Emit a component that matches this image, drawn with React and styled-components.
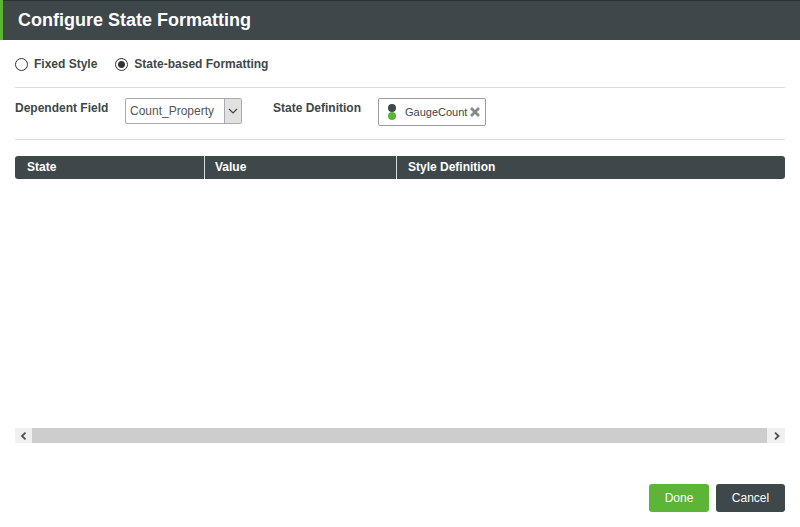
import React, { useState } from 'react';
import styled, { createGlobalStyle } from 'styled-components';

const GlobalStyle = createGlobalStyle`
  * {
    box-sizing: border-box;
  }

  body {
    margin: 0;
    background: #fff;
    color: #3e4749;
    font-family: "Liberation Sans", Arial, sans-serif;
    font-size: 12px;
    line-height: 16px;
  }

  button, select, input {
    font: inherit;
    margin: 0;
  }
`;

const Dialog = styled.main`
  display: flex;
  flex-direction: column;
  min-height: 100vh;
`;

const Header = styled.header`
  display: flex;
  align-items: center;
  height: 40px;
  padding-left: 15px;
  background: #3e4749;
  border-left: 3px solid #5cb536;
  box-shadow: inset 0 1px 0 #2b3235;
`;

const Title = styled.h1`
  margin: 0;
  color: #fff;
  font-size: 18px;
  line-height: 24px;
`;

const Content = styled.div`
  display: flex;
  flex: 1;
  flex-direction: column;
  padding: 0 15px;
`;

const ModeRow = styled.div`
  display: flex;
  gap: 18px;
  padding: 16px 0 15px;
  border-bottom: 1px solid #d8dbde;
`;

const RadioLabel = styled.label`
  display: flex;
  align-items: center;
  gap: 6px;
  font-weight: bold;
`;

const Radio = styled.input`
  appearance: none;
  width: 13px;
  height: 13px;
  border: 1px solid #333;
  border-radius: 50%;
  background: #fff;

  &:checked {
    background: radial-gradient(circle, #333 3px, #fff 4px);
  }
`;

const FieldRow = styled.div`
  display: flex;
  align-items: flex-start;
  height: 52px;
  padding-top: 10px;
  border-bottom: 1px solid #d8dbde;
`;

const FieldLabel = styled.label`
  width: ${props => props.$width};
  padding-top: 2px;
  font-weight: bold;
`;

const SelectBox = styled.div`
  display: grid;
  grid-template-columns: 1fr 17px;
  width: 117px;
  height: 26px;
  margin-right: 31px;
  border: 1px solid #a8abad;
  border-radius: 2px;
`;

const Select = styled.select`
  grid-area: 1 / 1 / 2 / 3;
  appearance: none;
  width: 100%;
  padding: 0 20px 0 4px;
  border: 0;
  background: transparent;
  color: #555;
`;

const SelectArrow = styled.span`
  grid-area: 1 / 2;
  display: flex;
  align-items: center;
  justify-content: center;
  border-left: 1px solid #a8abad;
  background: #e1e1e1;
  pointer-events: none;
`;

const Chip = styled.div`
  display: flex;
  align-items: center;
  height: 28px;
  padding: 0 5px 0 9px;
  border: 1px solid #999c9e;
  border-radius: 2px;
  font-size: 11px;
`;

const ChipName = styled.output`
  margin: 0 3px 0 9px;
`;

const IconButton = styled.button`
  display: flex;
  padding: 0;
  border: 0;
  background: none;
`;

const TablePane = styled.div`
  flex: 1;
  padding-top: 16px;
`;

const Table = styled.table`
  width: 100%;
  table-layout: fixed;
  border-collapse: separate;
  border-spacing: 0;
`;

const HeadCell = styled.th`
  width: ${props => props.$width};
  height: 23px;
  padding: 0 10px 1px;
  border-left: 1px solid #d8dbde;
  background: #3e4749;
  color: #fff;
  text-align: left;

  &:first-child {
    padding-left: 12px;
    border-left: 0;
    border-radius: 3px 0 0 3px;
  }

  &:last-child {
    padding-left: 11px;
    border-radius: 0 3px 3px 0;
  }
`;

const ScrollBar = styled.div`
  display: flex;
  height: 15px;
  background: #f0f0f0;
`;

const ScrollButton = styled.button`
  display: flex;
  align-items: center;
  justify-content: center;
  width: ${props => props.$width};
  padding: 0;
  border: 0;
  background: #f0f0f0;
`;

const ScrollThumb = styled.div`
  flex: 1;
  background: #cdcdcd;
`;

const Footer = styled.footer`
  display: flex;
  justify-content: flex-end;
  gap: 7px;
  padding: 41px 0 15px;
`;

const Button = styled.button`
  width: ${props => props.$width};
  height: 28px;
  padding: 0;
  border: 0;
  border-radius: 3px;
  background: ${props => (props.$primary ? '#5cb536' : '#3e4749')};
  color: #fff;
`;

const App = () => {
  const [mode, setMode] = useState('state');

  return (
    <Dialog>
      <GlobalStyle />
      <Header>
        <Title>Configure State Formatting</Title>
      </Header>
      <Content>
        <ModeRow>
          <RadioLabel>
            <Radio type="radio" name="mode" checked={mode === 'fixed'} onChange={() => setMode('fixed')} />
            Fixed Style
          </RadioLabel>
          <RadioLabel>
            <Radio type="radio" name="mode" checked={mode === 'state'} onChange={() => setMode('state')} />
            State-based Formatting
          </RadioLabel>
        </ModeRow>

        <FieldRow>
          <FieldLabel htmlFor="field" $width="110px">Dependent Field</FieldLabel>
          <SelectBox>
            <Select id="field" defaultValue="Count_Property">
              <option>Count_Property</option>
            </Select>
            <SelectArrow>
              <svg width="10" height="6" viewBox="0 0 10 6" fill="none" stroke="#444" strokeWidth="1.2">
                <path d="M1 1l4 4 4-4" />
              </svg>
            </SelectArrow>
          </SelectBox>
          <FieldLabel htmlFor="definition" $width="105px">State Definition</FieldLabel>
          <Chip>
            <svg width="8" height="16" viewBox="0 0 8 16">
              <circle cx="4" cy="4" r="4" fill="#3e4749" />
              <circle cx="4" cy="12" r="4" fill="#5cb536" />
            </svg>
            <ChipName id="definition">GaugeCount</ChipName>
            <IconButton type="button" aria-label="Remove GaugeCount">
              <svg width="10" height="10" viewBox="0 0 10 10" stroke="#888" strokeWidth="2.8">
                <path d="M1 1l8 8M9 1l-8 8" />
              </svg>
            </IconButton>
          </Chip>
        </FieldRow>

        <TablePane>
          <Table>
            <thead>
              <tr>
                <HeadCell $width="189px">State</HeadCell>
                <HeadCell $width="192px">Value</HeadCell>
                <HeadCell>Style Definition</HeadCell>
              </tr>
            </thead>
          </Table>
        </TablePane>

        <ScrollBar>
          <ScrollButton type="button" aria-label="Scroll left" $width="17px">
            <svg width="7" height="8" viewBox="0 0 7 8" fill="none" stroke="#505050" strokeWidth="1.8">
              <path d="M5.5 0.7L2 4l3.5 3.3" />
            </svg>
          </ScrollButton>
          <ScrollThumb />
          <ScrollButton type="button" aria-label="Scroll right" $width="18px">
            <svg width="7" height="8" viewBox="0 0 7 8" fill="none" stroke="#505050" strokeWidth="1.8">
              <path d="M2 0.7L5.5 4L2 7.3" />
            </svg>
          </ScrollButton>
        </ScrollBar>

        <Footer>
          <Button type="button" $primary $width="60px">Done</Button>
          <Button type="button" $width="69px">Cancel</Button>
        </Footer>
      </Content>
    </Dialog>
  );
};

export default App;
